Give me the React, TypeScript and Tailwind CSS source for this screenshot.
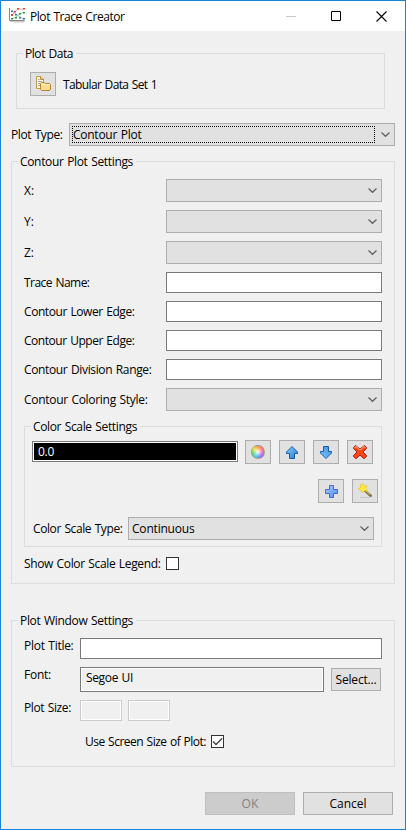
import React, { useLayoutEffect, useRef, useState } from "react";

/* Text run whose letter spacing is fitted to a given advance width. */
function T({ w, children, className = "" }: { w: number; children: string; className?: string }) {
  const ref = useRef<HTMLSpanElement>(null);
  const [spacing, setSpacing] = useState(0);
  useLayoutEffect(() => {
    if (ref.current) {
      const natural = ref.current.getBoundingClientRect().width;
      setSpacing((w - natural) / children.length);
    }
  }, [w, children]);
  return (
    <span
      ref={ref}
      className={`block w-fit shrink-0 whitespace-pre leading-[17px] [word-spacing:0.8px] ${className}`}
      style={{ letterSpacing: `${spacing}px` }}
    >
      {children}
    </span>
  );
}

function Group({ title, w, className, children }: { title: string; w: number; className: string; children: React.ReactNode }) {
  return (
    <section className={`flex shrink-0 flex-col border border-[#dcdcdc] ${className}`}>
      <div className="-mt-[9px] ml-1.5 h-[17px] w-fit shrink-0 bg-[#f0f0f0] pl-0.5 pr-[3px]">
        <T w={w}>{title}</T>
      </div>
      {children}
    </section>
  );
}

function Chevron() {
  return (
    <svg className="mr-1 shrink-0" width="9" height="7" viewBox="0 0 9 7" fill="none" stroke="#606060" strokeWidth="1.2">
      <path d="M.5 1.5 4.5 5.3 8.5 1.5" />
    </svg>
  );
}

function Combo({ className, children }: { className: string; children?: React.ReactNode }) {
  return (
    <div className={`flex h-[23px] shrink-0 items-center justify-between border border-[#adadad] bg-[#e1e1e1] ${className}`}>
      <div className="flex items-center">{children}</div>
      <Chevron />
    </div>
  );
}

const Input = ({ className }: { className: string }) => (
  <div className={`h-[21px] shrink-0 border border-[#7a7a7a] bg-white ${className}`} />
);

function Row({ label, w, combo }: { label: string; w: number; combo?: boolean }) {
  return (
    <div className="flex shrink-0 items-center justify-between pl-3 pr-3">
      <T w={w}>{label}</T>
      {combo ? <Combo className="w-[216px]" /> : <Input className="w-[216px]" />}
    </div>
  );
}

const IconButton = ({ children }: { children: React.ReactNode }) => (
  <button className="flex h-6 w-[26px] shrink-0 items-center justify-center border border-[#adadad] bg-[#e1e1e1]">{children}</button>
);

function AppIcon() {
  return (
    <svg width="16" height="16" viewBox="0 0 16 16">
      <path d="M.5 0V12.5H15.5" fill="none" stroke="#8a8a8a" />
      <path d="M1 13.5H16" stroke="#c9c9c9" />
      <path d="M5 14.5H15" stroke="#e4e4e4" />
      <path d="M3 7 6 4 9 1H15" fill="none" stroke="#f5a196" />
      <path d="M3 3 7 6 11 9 15 11" fill="none" stroke="#9dbde0" />
      <path d="M3 11 7 9 11 6 15 4" fill="none" stroke="#98cd9d" />
      <g fill="#e8432e"><path d="M2 6h2v2H2zM5 3h2v1.5H5zM8 0h2v1.5H8zM14 0h2v1.5h-2z" /></g>
      <g fill="#3b6fb6"><path d="M2 2.5h2V4H2zM6 6h2v1.5H6zM10 9h2v1.5h-2zM14 10h2v1.5h-2z" /></g>
      <g fill="#2e9440"><path d="M2 10h2v1.5H2zM6 9h2v1.5H6zM10 5h2v1.5h-2zM14 4h2v1.5h-2z" /></g>
    </svg>
  );
}

function FilesIcon() {
  return (
    <svg width="16" height="16" viewBox="0 0 16 16">
      <path d="M1.5.5H6L8.5 3V12.5H1.5Z" fill="#fffbe8" stroke="#c19a50" />
      <path d="M5.5.5V3.5H8.5" fill="#ecd08a" stroke="#b98a38" />
      <path d="M3 3.5H4.5M3 5.5H7M3 7.5H5M3 9.5H5" stroke="#8aa3c4" />
      <path d="M5.5 7.5 6.5 6.5H9.5L10.5 7.5H14.5L15.5 8.5V13L14.5 14.5H6.5L5.5 13.5Z" fill="#fbdc90" stroke="#b9822f" />
      <path d="M6.5 8.5H14.5" stroke="#fff0bd" />
    </svg>
  );
}

function WheelIcon() {
  return (
    <div className="flex h-3.5 w-3.5 items-center justify-center rounded-full border border-[#b08a90]/60 bg-[conic-gradient(#ff9d3c,#ff7a72_12%,#f25cc0_25%,#a868f5_37%,#5c96f5_48%,#48dcd8_60%,#5fe06a_72%,#e2ee4a_85%,#ff9d3c)]">
      <div className="h-full w-full rounded-full bg-[radial-gradient(circle,#ffffffdd_5%,#ffffff00_60%)]" />
    </div>
  );
}

function ArrowIcon({ down }: { down?: boolean }) {
  return (
    <svg width="14" height="15" viewBox="0 0 14 15" className={down ? "rotate-180" : ""}>
      <defs>
        <linearGradient id={down ? "ad" : "au"} x1="0" x2="1" y1={down ? "1" : "0"} y2={down ? "0" : "1"}>
          <stop offset="0" stopColor={down ? "#3f91e2" : "#8fd0fa"} />
          <stop offset="1" stopColor={down ? "#7cc6fa" : "#1d78d0"} />
        </linearGradient>
      </defs>
      <path d="M7 1.5 12.5 7V8.5H9.5V13.5H4.5V8.5H1.5V7Z" fill={down ? "url(#ad)" : "url(#au)"} stroke="#165cac" strokeLinejoin="round" />
    </svg>
  );
}

function DeleteIcon() {
  return (
    <svg width="16" height="16" viewBox="0 0 16 16">
      <path d="M3.5 1.5 8 5 12.5 1.5 14.5 3.5V4.5L11 8 14.5 11.5V12.5L12.5 14.5H11.5L8 11 4.5 14.5H3.5L1.5 12.5V11.5L5 8 1.5 4.5V3.5Z" fill="#fa4714" stroke="#b11b12" />
      <path d="M2.5 4 4 2.5 8 6 12 2.5 13.5 4" fill="none" stroke="#ffb09c" />
    </svg>
  );
}

function PlusIcon() {
  return (
    <svg width="14" height="14" viewBox="0 0 14 14">
      <defs>
        <linearGradient id="pl" x1="0" x2="1" y1="0" y2="1"><stop stopColor="#a8cbfa" /><stop offset="1" stopColor="#4c8cf0" /></linearGradient>
      </defs>
      <path d="M5.5 1.5H9.5V5.5H13.5V9.5H9.5V13.5H5.5V9.5H1.5V5.5H5.5Z" fill="url(#pl)" stroke="#4668cc" />
    </svg>
  );
}

function WandIcon() {
  return (
    <svg width="16" height="16" viewBox="0 0 16 16">
      <path d="M3 14.5H13" stroke="#c6c6c6" />
      <path d="M8 7.5 13.7 12.7" stroke="#74704a" strokeWidth="2.6" strokeLinecap="round" />
      <path d="M8 6.8 13 11.3" stroke="#d2c668" strokeWidth="1.1" />
      <path d="M6 .8 7.2 3.2 10 2.8 8.8 5.4 10 8 7.2 7.7 4.8 9.8 4.3 7 1.2 5.7 4 4.2 3.6 1.5Z" fill="#ffed3c" stroke="#edc52c" strokeWidth=".8" />
    </svg>
  );
}

function Checkbox({ checked }: { checked?: boolean }) {
  return (
    <div className="h-[13px] w-[13px] shrink-0 border border-[#333] bg-white">
      {checked && (
        <svg className="block" width="11" height="11" viewBox="0 0 11 11" fill="none" stroke="#404040" strokeWidth="1.3">
          <path d="M1 5.5 4 8.5 10.2 2.3" />
        </svg>
      )}
    </div>
  );
}

export default function App() {
  return (
    <div className="flex h-[830px] w-[406px] flex-col overflow-hidden border border-[#1883d7] bg-[#f0f0f0] font-['Open_Sans','Noto_Sans',sans-serif] text-[12px] text-black">
      <header className="flex h-[30px] shrink-0 items-center bg-white pl-2">
        <AppIcon />
        <T w={94.5} className="ml-[5px]">Plot Trace Creator</T>
        <div className="ml-auto mr-[18px] flex items-center gap-[35px]">
          <svg width="10" height="10" viewBox="0 0 10 10"><path d="M0 5.5H10" stroke="#c8c8c8" /></svg>
          <svg width="10" height="10" viewBox="0 0 10 10"><path d="M.5.5H9.5V9.5H.5Z" fill="none" stroke="#000" /></svg>
          <svg width="11" height="11" viewBox="0 0 11 11"><path d="M.5.5 10.5 10.5M10.5.5.5 10.5" stroke="#000" strokeWidth="1.1" /></svg>
        </div>
      </header>

      <Group title="Plot Data" w={48} className="ml-[15px] mt-[22px] h-14 w-[369px]">
        <div className="ml-[13px] mt-[10px] flex items-center gap-[7px]">
          <IconButton><FilesIcon /></IconButton>
          <T w={94}>Tabular Data Set 1</T>
        </div>
      </Group>

      <div className="ml-[10px] mr-[10px] mt-[14px] flex shrink-0 items-center justify-between">
        <T w={51.5}>Plot Type:</T>
        <Combo className="w-[326px]">
          <div className="ml-0.5 flex h-[17px] w-[303px] items-center border border-dotted border-black">
            <T w={68.5}>Contour Plot</T>
          </div>
        </Combo>
      </div>

      <Group title="Contour Plot Settings" w={113} className="ml-[10px] mt-[15px] h-[423px] w-[384px]">
        <div className="mt-[9px] flex flex-col gap-2">
          <Row label="X:" w={10} combo />
          <Row label="Y:" w={10} combo />
          <Row label="Z:" w={10} combo />
          <Row label="Trace Name:" w={65.5} />
          <Row label="Contour Lower Edge:" w={110.5} />
          <Row label="Contour Upper Edge:" w={110.5} />
          <Row label="Contour Division Range:" w={127.5} />
          <Row label="Contour Coloring Style:" w={123.5} combo />
        </div>
        <Group title="Color Scale Settings" w={104} className="ml-3 mt-[15px] h-[121px] w-[358px]">
          <div className="ml-[7px] mt-[5px] flex items-center gap-2">
            <div className="-mr-px -mt-px h-[21px] w-[206px] border border-[#7a7a7a] bg-white p-px">
              <div className="flex h-full items-center bg-black pl-1 text-white">
                <T w={16}>0.0</T>
              </div>
            </div>
            <IconButton><WheelIcon /></IconButton>
            <IconButton><ArrowIcon /></IconButton>
            <IconButton><ArrowIcon down /></IconButton>
            <IconButton><DeleteIcon /></IconButton>
          </div>
          <div className="mr-[3px] mt-[15px] flex justify-end gap-2">
            <IconButton><PlusIcon /></IconButton>
            <IconButton><WandIcon /></IconButton>
          </div>
          <div className="ml-2 mr-[7px] mt-[14px] flex items-center justify-between">
            <T w={89.5}>Color Scale Type:</T>
            <Combo className="w-[246px]"><T w={62.5} className="ml-[3px]">Continuous</T></Combo>
          </div>
        </Group>
        <div className="ml-3 mt-2 flex h-[17px] items-center">
          <div className="w-[142px]"><T w={136.5}>Show Color Scale Legend:</T></div>
          <Checkbox />
        </div>
      </Group>

      <Group title="Plot Window Settings" w={113} className="ml-[10px] mt-9 h-[147px] w-[384px]">
        <div className="ml-3 mt-[9px] flex h-[21px] items-start">
          <div className="-mt-[1px] w-14"><T w={49.5}>Plot Title:</T></div>
          <Input className="w-[302px]" />
        </div>
        <div className="ml-3 mt-2 flex h-[25px] items-start">
          <div className="-mt-[1px] w-14"><T w={27}>Font:</T></div>
          <div className="h-[25px] w-[244px] border border-[#7a7a7a] bg-[#f0f0f0] pl-[5px] pt-[1px] shadow-[inset_0_0_0_1px_#fff]">
            <T w={47}>Segoe UI</T>
          </div>
          <button className="ml-[7px] mt-px flex h-[23px] w-[50px] items-center justify-center border border-[#adadad] bg-[#e1e1e1]">
            <T w={41}>Select...</T>
          </button>
        </div>
        <div className="ml-3 mt-2 flex h-[21px] items-start">
          <div className="-mt-[1px] w-14"><T w={47}>Plot Size:</T></div>
          <div className="mr-1.5 h-[21px] w-[42px] border border-[#ccc] shadow-[inset_0_0_0_1px_#fff]" />
          <div className="h-[21px] w-[42px] border border-[#ccc] shadow-[inset_0_0_0_1px_#fff]" />
        </div>
        <div className="ml-[73px] mt-3 flex h-[17px] items-center">
          <div className="w-[126px]"><T w={121}>Use Screen Size of Plot:</T></div>
          <Checkbox checked />
        </div>
      </Group>

      <footer className="ml-[204px] mt-[25px] flex gap-2">
        <button className="flex h-[23px] w-[90px] items-center justify-center border border-[#bfbfbf] bg-[#ccc] text-[#838383]"><T w={17}>OK</T></button>
        <button className="flex h-[23px] w-[90px] items-center justify-center border border-[#adadad] bg-[#e1e1e1]"><T w={37}>Cancel</T></button>
      </footer>
    </div>
  );
}
